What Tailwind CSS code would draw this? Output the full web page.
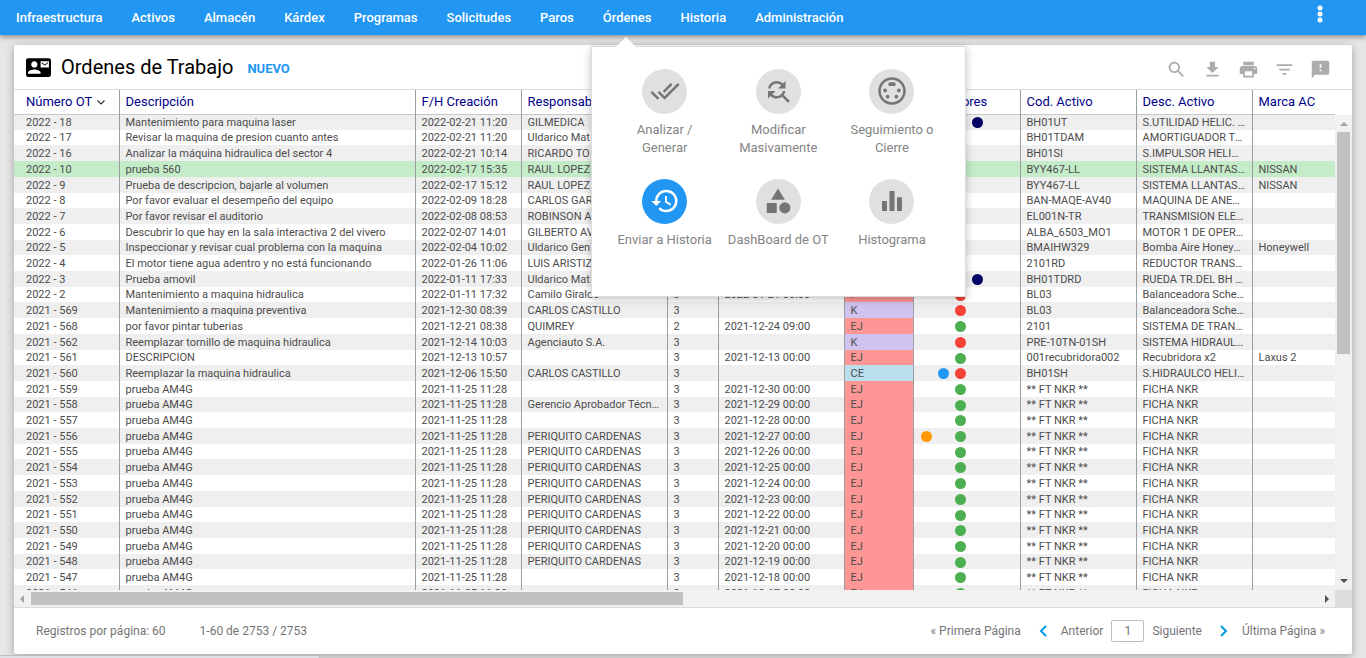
<!DOCTYPE html>
<html lang="es">
<head>
    <meta charset="UTF-8">
    <meta name="viewport" content="width=device-width, initial-scale=1.0">
    <title>Ordenes de Trabajo</title>

    <!-- Tailwind CSS -->
    <script src="https://cdn.jsdelivr.net/npm/@tailwindcss/browser@4"></script>
</head>

<body class="bg-[#e6e6e6] font-[Roboto,sans-serif] h-screen flex flex-col overflow-hidden">

<!-- Main menu -->
<header class="relative z-20 flex justify-between h-[35px] bg-[#2196f3] shadow-[0_2px_5px_rgba(0,0,0,0.4)] shrink-0">

    <nav class="flex items-center gap-[29px] pl-4 text-[13px] font-medium text-white">
        <a href="#">Infraestructura</a>
        <a href="#">Activos</a>
        <a href="#">Almacén</a>
        <a href="#">Kárdex</a>
        <a href="#">Programas</a>
        <a href="#">Solicitudes</a>
        <a href="#">Paros</a>
        <div class="relative">
            <a href="#">Órdenes</a>

            <!-- Órdenes submenu -->
            <div class="absolute top-[38px] -left-3 w-[375px] h-[251px] px-4 pt-[22px] bg-white border border-[#dcdcdc] shadow-[0_2px_8px_rgba(0,0,0,0.25)] font-normal text-[#848484]">
                <svg class="absolute -top-[10px] left-6 w-5 h-[10px]" viewBox="0 0 20 10" fill="#fff"><path d="M0 10L10 0l10 10z"/></svg>
                <div id="submenu" class="grid grid-cols-3 auto-rows-[110px]"></div>
            </div>
        </div>
        <a href="#">Historia</a>
        <a href="#">Administración</a>
    </nav>

    <button aria-label="Más opciones" class="w-6 mr-[34px] flex justify-center pt-[5px]">
        <svg class="w-[6px] h-[18px]" viewBox="0 0 6 18" fill="#fff"><circle cx="3" cy="3" r="2.5"/><circle cx="3" cy="9" r="2.5"/><circle cx="3" cy="15" r="2.5"/></svg>
    </button>

</header>

<main class="flex-1 min-h-0 flex flex-col mt-[10px] ml-[14px] mr-[14px] mb-1 bg-white rounded-xs shadow-[0_2px_8px_rgba(0,0,0,0.3)]">

    <!-- Title bar -->
    <div class="flex items-center h-[45px] shrink-0 pl-3 pr-[14px] border-b border-[#dcdcdc]">
        <svg class="w-[25px] h-[25px]" viewBox="0 0 24 24"><path d="M21 8V7l-3 2-3-2v1l3 2 3-2zm1-5H2C.9 3 0 3.9 0 5v14c0 1.1.9 2 2 2h20c1.1 0 1.99-.9 1.99-2L24 5c0-1.1-.9-2-2-2zM8 6c1.66 0 3 1.34 3 3s-1.34 3-3 3-3-1.34-3-3 1.34-3 3-3zm6 12H2v-1c0-2 4-3.1 6-3.1s6 1.1 6 3.1v1zm8-6h-8V6h8v6z"/></svg>
        <h1 class="ml-[10px] text-[20px]">Ordenes de Trabajo</h1>
        <button class="ml-[14px] pt-[3px] text-[13px] font-bold text-[#2196f3]">NUEVO</button>

        <div id="tools" class="flex ml-auto pt-1 text-[#acacac]"></div>
    </div>

    <!-- Grid -->
    <div class="flex flex-1 min-h-0">

        <div class="flex-1 min-w-0 overflow-hidden">
            <table class="w-full table-fixed border-collapse text-[11px] leading-[15px] text-[#4c4c4c]">
                <colgroup>
                    <col class="w-[105px]">
                    <col class="w-[296px]">
                    <col class="w-[106px]">
                    <col class="w-[146px]">
                    <col class="w-[51px]">
                    <col class="w-[126px]">
                    <col class="w-[69px]">
                    <col class="w-[107px]">
                    <col class="w-[116px]">
                    <col class="w-[116px]">
                    <col>
                </colgroup>
                <thead id="gridHead" class="text-[13px] text-[#00008b]"></thead>
                <tbody id="gridBody"></tbody>
            </table>
        </div>

        <!-- Vertical scrollbar -->
        <div class="w-[17px] mt-[25px] flex flex-col items-center bg-[#f1f1f1]">
            <svg class="w-2 h-[17px] shrink-0" viewBox="0 0 8 17" fill="#a3a3a3"><path d="M0 11l4-4 4 4z"/></svg>
            <div class="w-[13px] h-[222px] bg-[#c1c1c1]"></div>
            <svg class="w-2 h-[17px] mt-auto shrink-0" viewBox="0 0 8 17" fill="#505050"><path d="M0 6l4 4 4-4z"/></svg>
        </div>

    </div>

    <!-- Horizontal scrollbar -->
    <div class="flex h-[17px] shrink-0 items-center bg-[#f1f1f1]">
        <svg class="w-[17px] h-2 shrink-0" viewBox="0 0 17 8" fill="#a3a3a3"><path d="M10 0L6 4l4 4z"/></svg>
        <div class="w-[652px] h-[13px] bg-[#c1c1c1]"></div>
        <svg class="w-[17px] h-2 ml-auto shrink-0" viewBox="0 0 17 8" fill="#505050"><path d="M7 0l4 4-4 4z"/></svg>
        <div class="w-[17px] h-[17px] bg-[#dcdcdc]"></div>
    </div>

    <!-- Pagination -->
    <footer class="flex items-center h-[47px] shrink-0 pl-[22px] pr-[27px] border-t border-[#dcdcdc] text-[12px] text-[#757575]">
        <span>Registros por página: 60</span>
        <span class="ml-[34px]">1-60 de 2753 / 2753</span>

        <a href="#" class="ml-auto">« Primera Página</a>
        <button class="flex items-center ml-[18px]">
            <svg class="w-2 h-3 mr-[14px]" viewBox="0 0 8 12" fill="none" stroke="#039be5" stroke-width="2"><path d="M7 1L2 6l5 5"/></svg>
            Anterior
        </button>
        <input type="text" value="1" aria-label="Página" class="w-[33px] h-[22px] mx-2 border border-[#bdbdbd] rounded-xs text-center">
        <button class="flex items-center mr-[14px]">
            Siguiente
            <svg class="w-2 h-3 ml-[18px]" viewBox="0 0 8 12" fill="none" stroke="#039be5" stroke-width="2"><path d="M1 1l5 5-5 5"/></svg>
        </button>
        <a href="#">Última Página »</a>
    </footer>

</main>

<!-- Browser status strip -->
<div class="fixed bottom-0 left-0 w-[320px] h-[3px] bg-[#dee1e6] border-t border-r border-[#bcbec2] rounded-tr-sm"></div>

<script>

// Submenu: label, icon, active
const submenu = [
    ["Analizar / Generar", "M18 7l-1.41-1.41-6.34 6.34 1.41 1.41L18 7zm4.24-1.41L11.66 16.17 7.48 12l-1.41 1.41L11.66 19l12-12-1.42-1.41zM.41 13.41L6 19l1.41-1.41L1.83 12 .41 13.41z"],
    ["Modificar Masivamente", "M11 6c1.38 0 2.63.56 3.54 1.46L12 10h6V4l-2.05 2.05C14.68 4.78 12.93 4 11 4c-3.53 0-6.43 2.61-6.92 6H6.1c.46-2.28 2.48-4 4.9-4zm5.64 9.14c.66-.9 1.12-1.97 1.28-3.14H15.9c-.46 2.28-2.48 4-4.9 4-1.38 0-2.63-.56-3.54-1.46L10 12H4v6l2.05-2.05C7.32 17.22 9.07 18 11 18c1.55 0 2.98-.51 4.14-1.36L20 21.49 21.49 20l-4.85-4.86z"],
    ["Seguimiento o Cierre", "M8 11.5c0-.83-.67-1.5-1.5-1.5S5 10.67 5 11.5 5.67 13 6.5 13 8 12.33 8 11.5zm7-5c0-.83-.67-1.5-1.5-1.5h-3C9.67 5 9 5.67 9 6.5S9.67 8 10.5 8h3c.83 0 1.5-.67 1.5-1.5zM8.5 15c-.83 0-1.5.67-1.5 1.5S7.67 18 8.5 18s1.5-.67 1.5-1.5S9.33 15 8.5 15zM12 1C5.93 1 1 5.93 1 12s4.93 11 11 11 11-4.93 11-11S18.07 1 12 1zm0 20c-4.96 0-9-4.04-9-9s4.04-9 9-9 9 4.04 9 9-4.04 9-9 9zm5.5-11c-.83 0-1.5.67-1.5 1.5s.67 1.5 1.5 1.5 1.5-.67 1.5-1.5-.67-1.5-1.5-1.5zm-2 5c-.83 0-1.5.67-1.5 1.5s.67 1.5 1.5 1.5 1.5-.67 1.5-1.5-.67-1.5-1.5-1.5z"],
    ["Enviar a Historia", "M13 3a9 9 0 0 0-9 9H1l3.89 3.89.07.14L9 12H6c0-3.87 3.13-7 7-7s7 3.13 7 7-3.13 7-7 7c-1.93 0-3.68-.79-4.94-2.06l-1.42 1.42A8.954 8.954 0 0 0 13 21a9 9 0 0 0 0-18zm-1 5v5l4.28 2.54.72-1.21-3.5-2.08V8H12z", true],
    ["DashBoard de OT", "M12 2l-5.5 9h11zM17.5 13a4.5 4.5 0 1 0 0 9 4.5 4.5 0 0 0 0-9zM3 13.5h8v8H3z"],
    ["Histograma", "M10 20h4V4h-4v16zm-6 0h4v-8H4v8zM16 9v11h4V9h-4z"]
];

document.getElementById("submenu").innerHTML = submenu.map(([label, icon, active]) => `
    <a href="#" class="flex flex-col items-center text-center leading-[18px]">
        <span class="${active ? "bg-[#2196f3] text-white" : "bg-[#e0e0e0] text-[#757575]"} flex items-center justify-center w-[45px] h-[45px] mb-[7px] rounded-full">
            <svg class="w-[30px] h-[30px]" viewBox="0 0 24 24" fill="currentColor"><path d="${icon}"/></svg>
        </span>
        <span class="px-2 -mx-2">${label.includes("/") ? label.replace("/ ", "/<br>") : label}</span>
    </a>
`).join("");

//----------------------------

const tools = [
    ["Buscar", "M15.5 14h-.79l-.28-.27C15.41 12.59 16 11.11 16 9.5 16 5.91 13.09 3 9.5 3S3 5.91 3 9.5 5.91 16 9.5 16c1.61 0 3.09-.59 4.23-1.57l.27.28v.79l5 4.99L20.49 19l-4.99-5zm-6 0C7.01 14 5 11.99 5 9.5S7.01 5 9.5 5 14 7.01 14 9.5 11.99 14 9.5 14z"],
    ["Descargar", "M19 9h-4V3H9v6H5l7 7 7-7zM5 18v2h14v-2H5z"],
    ["Imprimir", "M19 8H5c-1.66 0-3 1.34-3 3v6h4v4h12v-4h4v-6c0-1.66-1.34-3-3-3zm-3 11H8v-5h8v5zm3-7c-.55 0-1-.45-1-1s.45-1 1-1 1 .45 1 1-.45 1-1 1zm-1-9H6v4h12V3z"],
    ["Filtrar", "M10 18h4v-2h-4v2zM3 6v2h18V6H3zm3 7h12v-2H6v2z"],
    ["Comentarios", "M20 2H4c-1.1 0-1.99.9-1.99 2L2 22l4-4h14c1.1 0 2-.9 2-2V4c0-1.1-.9-2-2-2zm-7 12h-2v-2h2v2zm0-4h-2V6h2v4z"]
];

document.getElementById("tools").innerHTML = tools.map(([label, icon]) => `
    <button aria-label="${label}" class="flex justify-center w-9">
        <svg class="w-[21px] h-[21px]" viewBox="0 0 24 24" fill="currentColor"><path d="${icon}"/></svg>
    </button>
`).join("");

//----------------------------

const heads = ["Número OT", "Descripción", "F/H Creación", "Responsable", "Pri.", "F/H Inicio", "Estado", "Indicadores", "Cod. Activo", "Desc. Activo", "Marca AC"];

document.getElementById("gridHead").innerHTML = "<tr class='h-6 border-b border-[#c8c8c8]'>" + heads.map((h, i) => `
    <th class="px-[6px] ${i === 0 ? "pl-3" : ""} border-r border-[#9e9e9e] last:border-r-0 text-left font-normal whitespace-nowrap">${h}${i === 0 ? '<svg class="inline w-2 h-[5px] ml-[5px]" viewBox="0 0 8 5" fill="none" stroke="#333" stroke-width="1.2"><path d="M.5.5L4 4 7.5.5"/></svg>' : ""}</th>
`).join("") + "</tr>";

// number | description | created | responsible | priority | start | state | dots | asset | asset description | brand
const rows = `2022 - 18|Mantenimiento para maquina laser|2022-02-21 11:20|GILMEDICA|3||EJ|..rn|BH01UT|S.UTILIDAD HELIC. PRINCIPAL|
2022 - 17|Revisar la maquina de presion cuanto antes|2022-02-21 11:20|Uldarico Mat|3||EJ|..r.|BH01TDAM|AMORTIGUADOR TRASERO|
2022 - 16|Analizar la máquina hidraulica del sector 4|2022-02-21 10:14|RICARDO TO|3||EJ|..r.|BH01SI|S.IMPULSOR HELICOPTERO|
2022 - 10|prueba 560|2022-02-17 15:35|RAUL LOPEZ|3||EJ|..r.|BYY467-LL|SISTEMA LLANTAS BYY467|NISSAN
2022 - 9|Prueba de descripcion, bajarle al volumen|2022-02-17 15:12|RAUL LOPEZ|3||EJ|..r.|BYY467-LL|SISTEMA LLANTAS BYY467|NISSAN
2022 - 8|Por favor evaluar el desempeño del equipo|2022-02-09 18:28|CARLOS GAR|3||EJ|..g.|BAN-MAQE-AV40|MAQUINA DE ANESTESIA|
2022 - 7|Por favor revisar el auditorio|2022-02-08 08:53|ROBINSON A|3||EJ|..r.|EL001N-TR|TRANSMISION ELECTRICA|
2022 - 6|Descubrir lo que hay en la sala interactiva 2 del vivero|2022-02-07 14:01|GILBERTO AV|3||EJ|..g.|ALBA_6503_MO1|MOTOR 1 DE OPERACION|
2022 - 5|Inspeccionar y revisar cual problema con la maquina|2022-02-04 10:02|Uldarico Gen|3||EJ|..r.|BMAIHW329|Bomba Aire Honeywell|Honeywell
2022 - 4|El motor tiene agua adentro y no está funcionando|2022-01-26 11:06|LUIS ARISTIZ|3||EJ|..r.|2101RD|REDUCTOR TRANSMISION|
2022 - 3|Prueba amovil|2022-01-11 17:33|Uldarico Mat|3||EJ|..rn|BH01TDRD|RUEDA TR.DEL BH DERECHA|
2022 - 2|Mantenimiento a maquina hidraulica|2022-01-11 17:32|Camilo Giraldo|3|2022-01-21 00:00|P|..r.|BL03|Balanceadora Schenck|
2021 - 569|Mantenimiento a maquina preventiva|2021-12-30 08:39|CARLOS CASTILLO|3||K|..r.|BL03|Balanceadora Schenck|
2021 - 568|por favor pintar tuberias|2021-12-21 08:38|QUIMREY|2|2021-12-24 09:00|EJ|..g.|2101|SISTEMA DE TRANSMISION|
2021 - 562|Reemplazar tornillo de maquina hidraulica|2021-12-14 10:03|Agenciauto S.A.|3||K|..r.|PRE-10TN-01SH|SISTEMA HIDRAULICO|
2021 - 561|DESCRIPCION|2021-12-13 10:57||3|2021-12-13 00:00|EJ|..g.|001recubridora002|Recubridora x2|Laxus 2
2021 - 560|Reemplazar la maquina hidraulica|2021-12-06 15:50|CARLOS CASTILLO|3||CE|.br.|BH01SH|S.HIDRAULCO HELICOPTERO|`.split("\n").map(line => line.split("|"));

// The AM4G tests are one per day, counting down
for(let n=559;n>=546;n--){

    let who = n === 558 ? "Gerencio Aprobador Técnico" : (n <= 556 && n >= 548 ? "PERIQUITO CARDENAS" : "");

    rows.push([`2021 - ${n}`, "prueba AM4G", "2021-11-25 11:28", who, "3", `2021-12-${n - 529} 00:00`, "EJ", n === 556 ? "o.g." : "..g.", "** FT NKR **", "FICHA NKR", ""]);

}

const stateColors = {
    EJ: "bg-[#ff9696]",
    P: "bg-[#ff9696]",
    K: "bg-[#cfc3ef]",
    CE: "bg-[#b9deec]"
};

const dotColors = {
    ".": "bg-transparent",
    r: "bg-[#f44336]",
    g: "bg-[#4caf50]",
    b: "bg-[#2196f3]",
    o: "bg-[#ff9800]",
    n: "bg-[#000064]"
};

function dots(s){

    return "<div class='flex gap-[6px] pt-px pl-px'>" + [...s].map(c => `<i class="w-[11px] h-[11px] rounded-full ${dotColors[c]}"></i>`).join("") + "</div>";

}

document.getElementById("gridBody").innerHTML = rows.map((row, r) => `
    <tr class="${r === 3 ? "bg-[#c5ecc8]" : "odd:bg-[#efefef]"} ${[1, 5, 8].includes(r % 10) ? "h-[15px]" : "h-4"}">
        ${row.map((cell, i) => `
        <td class="py-0 px-[6px] ${i === 0 ? "pl-3" : ""} ${i === 6 ? stateColors[cell] : ""} border-r border-[#9e9e9e] last:border-r-0 truncate">${i === 7 ? dots(cell) : cell}</td>`).join("")}
    </tr>
`).join("");

</script>

</body>
</html>
